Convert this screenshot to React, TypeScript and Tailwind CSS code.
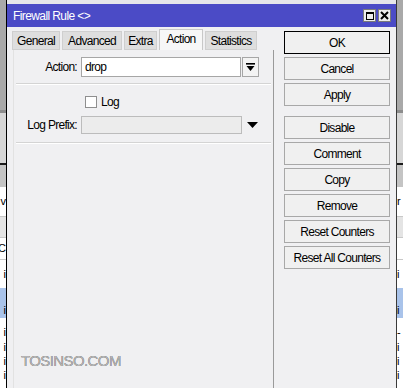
import React from "react";

const font = "font-['Liberation_Sans',Arial,sans-serif]";
// winbox text is narrow: Arial at 12px squeezed a little
const ui = "text-[12px] tracking-[-0.7px] text-black";

const tabs = ["General", "Advanced", "Extra", "Action", "Statistics"];
const tabWidths: Record<string, string> = {
  General: "w-[48px]",
  Advanced: "w-[60px]",
  Extra: "w-[33px]",
  Action: "w-[44px]",
  Statistics: "w-[52px]",
};

// background rows of the main window that peeks out on both sides
const BackStrip: React.FC<{ side: "left" | "right" }> = ({ side }) => {
  const txt = `overflow-hidden leading-none ${side === "left" ? "justify-end" : "justify-start"}`;
  return (
    <div className="w-[6px] h-full flex flex-col overflow-hidden bg-white text-[11px] text-black">
      <div className="h-[110px] bg-[#a9a9a9] shrink-0" />
      <div className="h-[3px] bg-[#8c8c8c] shrink-0" />
      <div className="h-[50px] bg-[#d6d6d6] shrink-0" />
      <div className="h-[2px] bg-[#1a1a1a] shrink-0" />
      <div className="h-[22px] bg-[#c4c4c4] shrink-0" />
      <div className={`h-[30px] flex items-center shrink-0 border-b border-[#c8c8c8] ${txt}`}>
        {side === "left" ? "v" : "r"}
      </div>
      <div className="h-[21px] bg-[#e4e4e4] shrink-0 border-b border-[#c8c8c8]" />
      <div className={`h-[22px] flex items-center shrink-0 border-b border-[#c8c8c8] ${txt}`}>
        {side === "left" ? "C" : ""}
      </div>
      <div className={`h-[28px] flex items-center shrink-0 ${txt}`}>i</div>
      <div className={`h-[30px] bg-[#a9c3ea] flex items-end pb-[2px] shrink-0 ${txt}`}>i</div>
      <div className={`h-[22px] flex items-end pb-[2px] shrink-0 ${txt}`}>{side === "left" ? "i" : "-"}</div>
      <div className={`h-[15px] flex items-end pb-[2px] shrink-0 ${txt}`}>i</div>
      <div className={`h-[14px] flex items-end pb-[2px] shrink-0 ${txt}`}>i</div>
      <div className={`h-[12px] flex items-end shrink-0 ${txt}`}>i</div>
    </div>
  );
};

const SideButton: React.FC<{ label: string; primary?: boolean; className?: string }> = ({
  label,
  primary,
  className = "",
}) => (
  <button
    type="button"
    className={`h-[23px] w-full flex items-center justify-center bg-[#f0f0f0] ${ui} ${
      primary ? "border border-black" : "border border-[#a8a8a8]"
    } ${className}`}
  >
    {label}
  </button>
);

export default function App() {
  return (
    <div className={`w-[403px] h-[388px] flex overflow-hidden bg-white ${font}`}>
      <BackStrip side="left" />

      {/* Firewall Rule window */}
      <div className="w-[391px] h-full flex flex-col bg-[#f0f0f2] border-l border-black border-r border-r-[#3a3a3a]">
        <div className="h-[4px] bg-[#e6e6ea]" />
        <div className="h-[23px] bg-[#4b4bc6] flex items-center pl-[6px] pr-[5px]">
          <span className="text-white text-[12px] tracking-[-0.6px] leading-none">Firewall Rule &lt;&gt;</span>
          <div className="ml-auto flex gap-[2px]">
            <div className="w-[13px] h-[13px] bg-[#ececec] border border-[#7a7a7a] flex items-center justify-center">
              <div className="w-[8px] h-[8px] border border-black border-t-2" />
            </div>
            <div className="w-[13px] h-[13px] bg-[#ececec] border border-[#7a7a7a] flex items-center justify-center">
              <svg width="9" height="9" viewBox="0 0 9 9">
                <path d="M1 1 L8 8 M8 1 L1 8" stroke="black" strokeWidth="2" />
              </svg>
            </div>
          </div>
        </div>

        <div className="flex-1 flex pl-[4px] pt-[2px]">
          {/* left column: tabs + content */}
          <div className="w-[263px] flex flex-col">
            <div className="h-[21px] flex items-end gap-[2px] pl-[1px]">
              {tabs.map((t) => (
                <div
                  key={t}
                  className={`${tabWidths[t]} flex items-center justify-center ${ui} ${
                    t === "Action"
                      ? "h-[21px] bg-[#f7f7f7] border border-b-0 border-[#c8c8c8] pb-[3px]"
                      : "h-[19px] bg-[#dedede] border border-[#cfcfcf]"
                  }`}
                >
                  {t}
                </div>
              ))}
            </div>

            <div className="flex-1 border-l border-[#e2e2e2] border-r border-r-[#9a9a9a] ml-[2px] flex flex-col">
              {/* Action */}
              <div className="flex items-center mt-[7px] h-[20px]">
                <span className={`w-[67px] text-right pr-[4px] ${ui}`}>Action:</span>
                <div className={`w-[160px] h-[20px] bg-white border border-[#a6a6a6] flex items-center pl-[3px] ${ui}`}>
                  drop
                </div>
                <div className="ml-[1px] w-[17px] h-[20px] bg-[#f3f3f3] border border-[#a6a6a6] flex items-center justify-center">
                  <svg width="9" height="10" viewBox="0 0 9 10">
                    <rect x="0" y="1" width="9" height="1.6" fill="black" />
                    <path d="M0.5 4 L8.5 4 L4.5 9 Z" fill="black" />
                  </svg>
                </div>
              </div>

              <div className="mt-[6px] mx-[2px] border-t border-[#d4d4d4] border-b border-b-white" />

              {/* Log */}
              <div className="flex items-center mt-[10px] h-[13px] pl-[71px]">
                <div className="w-[12px] h-[12px] bg-white border border-[#8f8f8f]" />
                <span className={`ml-[4px] ${ui}`}>Log</span>
              </div>

              {/* Log Prefix */}
              <div className="flex items-center mt-[8px] h-[18px]">
                <span className={`w-[67px] text-right pr-[4px] ${ui}`}>Log Prefix:</span>
                <div className="w-[161px] h-[18px] bg-[#ececec] border border-[#bcbcbc]" />
                <svg className="ml-[5px]" width="11" height="7" viewBox="0 0 11 7">
                  <path d="M0 0 L11 0 L5.5 6 Z" fill="black" />
                </svg>
              </div>

              <div className="mt-[8px] mx-[2px] border-t border-[#d4d4d4] border-b border-b-white" />

              <div className="mt-auto mb-[15px] pl-[7px]">
                <span className="text-[15px] text-[#b4b4b4] tracking-[-0.6px] [text-shadow:0_0_0.6px_#444]">
                  TOSINSO.COM
                </span>
              </div>
            </div>
          </div>

          {/* right column: buttons */}
          <div className="ml-[10px] w-[106px] flex flex-col gap-[3px] pt-[2px]">
            <SideButton label="OK" primary />
            <SideButton label="Cancel" />
            <SideButton label="Apply" />
            <SideButton label="Disable" className="mt-[7px]" />
            <SideButton label="Comment" />
            <SideButton label="Copy" />
            <SideButton label="Remove" />
            <SideButton label="Reset Counters" />
            <SideButton label="Reset All Counters" />
          </div>
        </div>
      </div>

      <BackStrip side="right" />
    </div>
  );
}
